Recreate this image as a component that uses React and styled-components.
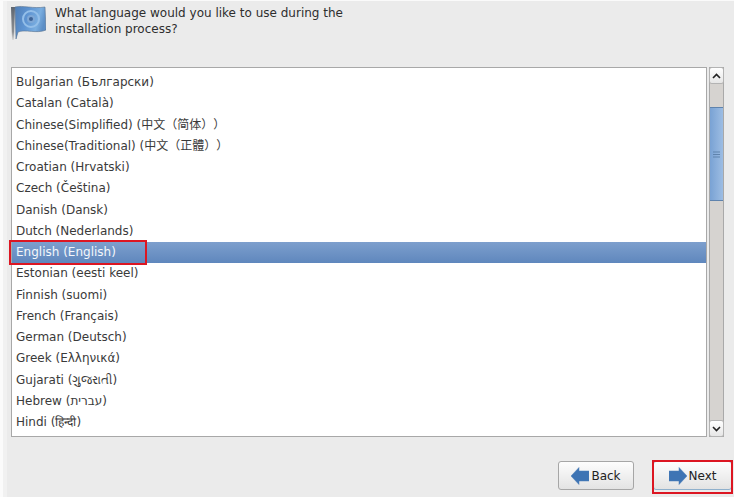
import React from "react";
import styled, { createGlobalStyle } from "styled-components";

const Global = createGlobalStyle`
  html, body { margin: 0; padding: 0; background: #ebebeb; }
  body { font-family: "DejaVu Sans", "Noto Sans CJK SC", sans-serif; text-spacing-trim: space-all; }
`;
const Page = styled.div`
  width: 734px; height: 497px; overflow: hidden; box-sizing: border-box;
  display: flex; flex-direction: column; padding: 0 2px 0 11px; color: #333;
  border-top: 1px solid #fafafa;
  background: linear-gradient(90deg, #fbfbfb 3px, #f1f1f1 3px, #f1f1f1 7px, #ebebeb 7px);
`;
const Header = styled.header`
  height: 66px; display: flex; gap: 9px; flex: none; padding-top: 4px; box-sizing: border-box;
`;
const Question = styled.h1`
  margin: 0; width: 300px; font-size: 12px; font-weight: 400; line-height: 16px; color: #2e2e2e;
`;
const Middle = styled.div`
  display: flex; gap: 2px; height: 370px; flex: none; margin-right: 8px;
`;
const ListBox = styled.ul`
  position: relative; flex: 1; margin: 0; padding: 4px 0 0 0; list-style: none; background: #fff;
  border: 1px solid #a8a8a8; box-sizing: border-box;
`;
const Row = styled.li`
  height: 21.25px; line-height: 21.25px; padding-left: 4px; font-size: 12px; white-space: nowrap;
  color: ${p => (p.$selected ? "#f4f7fb" : "#3a3a3a")};
  background: ${p => (p.$selected ? "linear-gradient(#7d9fcd, #5f87bd)" : "transparent")};
`;
const RedMark = styled.span`
  position: absolute; left: -3px; top: 172px; width: 138px; height: 25px; box-sizing: border-box;
  border: 2px solid #dc1622; pointer-events: none;
`;
const Scrollbar = styled.div`
  width: 15px; display: flex; flex-direction: column; background: #d6d3d0; border: 1px solid #a9a9a9; box-sizing: border-box;
`;
const Arrow = styled.div`
  height: 15px; flex: none; background: linear-gradient(#fff, #e6e6e6); display: flex; align-items: center; justify-content: center;
  border-radius: 2px; box-shadow: 0 0 0 1px #b3b3b3;
`;
const Track = styled.div`
  flex: 1; padding-top: 24px; box-sizing: border-box;
`;
const Thumb = styled.div`
  height: 94px; box-sizing: border-box; background: linear-gradient(90deg, #79a2d4, #9dbde3);
  border-top: 1px solid #5f83ad; border-bottom: 1px solid #5f83ad;
  display: flex; align-items: center; justify-content: center;
`;
const Footer = styled.footer`
  flex: 1; display: flex; justify-content: flex-end; align-items: flex-start; gap: 19px; padding-top: 24px;
`;
const Button = styled.button`
  position: relative; height: 29px; width: ${p => p.$w}px; padding: 0; display: flex; align-items: center; justify-content: center; gap: ${p => p.$gap}px;
  font: 12px "DejaVu Sans", sans-serif; color: #222; border-radius: 3px;
  border: 1px solid ${p => (p.$focus ? "#8fb0cc" : "#a6a6a6")}; background: linear-gradient(#fdfdfd, #e3e3e3);
`;
const NextMark = styled.span`
  position: absolute; inset: -2px -2px -5px -2px; border: 2px solid #dc1622; pointer-events: none;
`;

const languages = [
  "Bulgarian (Български)", "Catalan (Català)", "Chinese(Simplified) (中文（简体））", "Chinese(Traditional) (中文（正體））",
  "Croatian (Hrvatski)", "Czech (Čeština)", "Danish (Dansk)", "Dutch (Nederlands)", "English (English)",
  "Estonian (eesti keel)", "Finnish (suomi)", "French (Français)", "German (Deutsch)", "Greek (Ελληνικά)",
  "Gujarati (ગુજરાતી)", "Hebrew (עברית)", "Hindi (हिन्दी)",
];

const Flag = () => (
  <svg width="35" height="36" viewBox="0 0 35 36">
    <defs>
      <linearGradient id="f" x1="0" x2="1" y1="0" y2="0.3">
        <stop offset="0" stopColor="#4f7db5" /><stop offset="0.45" stopColor="#5e94d2" /><stop offset="0.8" stopColor="#7aaee0" /><stop offset="1" stopColor="#5c8ec6" />
      </linearGradient>
      <linearGradient id="p" x1="0" x2="0" y1="0" y2="1">
        <stop offset="0" stopColor="#5f6670" /><stop offset="0.75" stopColor="#8d8f92" /><stop offset="1" stopColor="#dcdcdc" />
      </linearGradient>
    </defs>
    <path d="M0 2 L4 2 L3 35 L1 35 Z" fill="url(#p)" />
    <path d="M4 2 C12 0 22 4 34 2 L35 25 C26 29 14 24 7 27 L5 34 Z" fill="url(#f)" stroke="#56708f" strokeWidth="0.6" />
    <circle cx="20" cy="14" r="8" fill="none" stroke="#94bfe9" strokeWidth="2" />
    <circle cx="20" cy="14" r="4" fill="#7fa8d6" />
    <circle cx="20" cy="14" r="2" fill="#3e6498" />
  </svg>
);
const BackIcon = () => (
  <svg width="18" height="18" viewBox="0 0 18 18"><path d="M0 9 L8 0.5 V4 H18 V14 H8 V17.5 Z" fill="#3e74b4" stroke="#4a7fb9" strokeWidth="0.5" /></svg>
);
const NextIcon = () => (
  <svg width="18" height="18" viewBox="0 0 18 18"><path d="M18 9 L10 0.5 V4 H0 V14 H10 V17.5 Z" fill="#3e74b4" stroke="#4a7fb9" strokeWidth="0.5" /></svg>
);
const Chev = ({ up }) => (
  <svg width="9" height="6" viewBox="0 0 9 6"><path d={up ? "M1 5 L4.5 1.5 L8 5" : "M1 1 L4.5 4.5 L8 1"} fill="none" stroke="#222" strokeWidth="1.6" /></svg>
);
const Grip = () => (
  <svg width="7" height="7" viewBox="0 0 7 7"><path d="M0 1H7M0 3.5H7M0 6H7" stroke="#5f83ad" /></svg>
);

export default function App() {
  return (
    <Page>
      <Global />
      <Header>
        <Flag />
        <Question>What language would you like to use during the installation process?</Question>
      </Header>
      <Middle>
        <ListBox>
          {languages.map(l => <Row key={l} $selected={l.startsWith("English")}>{l}</Row>)}
          <RedMark />
        </ListBox>
        <Scrollbar>
          <Arrow><Chev up /></Arrow>
          <Track><Thumb><Grip /></Thumb></Track>
          <Arrow><Chev /></Arrow>
        </Scrollbar>
      </Middle>
      <Footer>
        <Button $w={76} $gap={2}><BackIcon />Back</Button>
        <Button $w={79} $gap={2} $focus><NextIcon />Next<NextMark /></Button>
      </Footer>
    </Page>
  );
}
